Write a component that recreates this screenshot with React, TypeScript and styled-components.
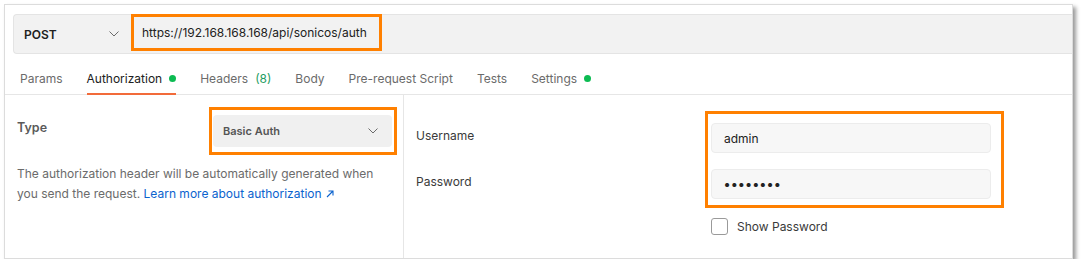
import styled, { createGlobalStyle } from 'styled-components';

const GlobalStyle = createGlobalStyle`
	html, body {
		margin: 0;
		padding: 0;
		background: #ffffff;
	}
	body {
		font-family: Inter, 'Noto Sans', 'Liberation Sans', sans-serif;
		font-size: 12px;
		color: #212121;
	}
`;

const ORANGE = '#ff8000';

const Card = styled.div`
	margin: 4px 0 0 4px;
	width: 1069px;
	height: 255px;
	box-sizing: border-box;
	background: #fff;
	border: 1px solid #dcdcdc;
	box-shadow: 3px 3px 4px rgba(0, 0, 0, 0.4);
	display: flex;
	flex-direction: column;
	overflow: hidden;
`;

const RequestBar = styled.div`
	margin: 9px 0 0 8px;
	height: 40px;
	box-sizing: border-box;
	display: flex;
	align-items: stretch;
	background: #f2f2f2;
	border: 1px solid #e4e4e4;
	border-right: none;
	border-radius: 4px 0 0 4px;
`;

const Method = styled.div`
	width: 117px;
	box-sizing: border-box;
	display: flex;
	align-items: center;
	justify-content: space-between;
	padding: 0 12px 0 10px;
	font-weight: 600;
	font-size: 12px;
	color: #212121;
`;

const Annotated = styled.div`
	border: 3px solid ${ORANGE};
	box-sizing: border-box;
`;

const UrlBox = styled(Annotated)`
	width: 251px;
	height: 37px;
	margin-top: -1px;
	display: flex;
	align-items: center;
	padding-left: 8px;
	color: #212121;
	font-size: 12px;
`;

const Tabs = styled.div`
	display: flex;
	gap: 24px;
	padding-left: 15px;
	height: 41px;
	border-bottom: 1px solid #e6e6e6;
	box-sizing: border-box;
`;

const Tab = styled.div<{ active?: boolean }>`
	display: flex;
	align-items: center;
	gap: 7px;
	padding-top: 10px;
	box-sizing: border-box;
	color: ${(p) => (p.active ? '#212121' : '#6b6b6b')};
	border-bottom: 2px solid ${(p) => (p.active ? '#f26b3a' : 'transparent')};
	margin-bottom: -1px;
	.count {
		color: #1f9d63;
	}
`;

const Dot = styled.span`
	width: 7px;
	height: 7px;
	border-radius: 50%;
	background: #0cbb52;
	display: inline-block;
`;

const Body = styled.div`
	flex: 1;
	display: flex;
`;

const LeftPanel = styled.div`
	width: 399px;
	box-sizing: border-box;
	border-right: 1px solid #e6e6e6;
	padding: 12px 6px 0 12px;
`;

const TypeRow = styled.div`
	display: flex;
	justify-content: space-between;
	align-items: flex-start;
`;

const TypeLabel = styled.div`
	margin-top: 13px;
	font-weight: 600;
	font-size: 12.5px;
	color: #5a5a5a;
	line-height: 16px;
`;

const TypeBox = styled(Annotated)`
	width: 188px;
	height: 48px;
	padding: 5px 2px 4px 1px;
`;

const Select = styled.div`
	height: 32px;
	background: #f0f0f0;
	border-radius: 4px;
	display: flex;
	align-items: center;
	justify-content: space-between;
	padding: 0 14px 0 10px;
	font-weight: 600;
	font-size: 11px;
	color: #555;
`;

const Description = styled.p`
	margin: 9px 0 0;
	max-width: 368px;
	line-height: 20px;
	color: #6b6b6b;
	a {
		color: #0b63ce;
		text-decoration: none;
	}
`;

const RightPanel = styled.div`
	flex: 1;
	display: flex;
	padding: 16px 0 0 12px;
`;

const Labels = styled.div`
	width: 289px;
	padding-top: 17px;
	display: flex;
	flex-direction: column;
	gap: 30px;
	color: #3a3a3a;
	line-height: 16px;
`;

const Fields = styled.div`
	display: flex;
	flex-direction: column;
`;

const FieldBox = styled(Annotated)`
	width: 299px;
	padding: 9px 10px 6px 3px;
	display: flex;
	flex-direction: column;
	gap: 16px;
`;

const Input = styled.div<{ secret?: boolean }>`
	height: 30px;
	box-sizing: border-box;
	background: #f7f7f7;
	border: 1px solid #ececec;
	border-radius: 4px;
	display: flex;
	align-items: center;
	padding-left: 12px;
	color: #212121;
	font-size: ${(p) => (p.secret ? '13px' : '12px')};
	letter-spacing: ${(p) => (p.secret ? '1px' : 'normal')};
	font-weight: ${(p) => (p.secret ? 700 : 400)};
`;

const CheckRow = styled.label`
	margin: 10px 0 0 6px;
	display: flex;
	align-items: center;
	gap: 9px;
	color: #3a3a3a;
`;

const Box = styled.span`
	width: 17px;
	height: 17px;
	box-sizing: border-box;
	border: 1px solid #9a9a9a;
	border-radius: 3px;
	background: #fff;
`;

const Chevron = () => (
	<svg width="10" height="6" viewBox="0 0 10 6" fill="none">
		<polyline points="0.5,0.5 5,5 9.5,0.5" stroke="#6b6b6b" strokeWidth="1" />
	</svg>
);

const ExternalArrow = () => (
	<svg width="8" height="8" viewBox="0 0 8 8" fill="none" style={{ marginLeft: 4 }}>
		<path d="M1 7 L7 1 M2.5 1 H7 V5.5" stroke="#0b63ce" strokeWidth="1.1" />
	</svg>
);

const App = () => {
	return (
		<>
			<GlobalStyle />
			<Card>
				<RequestBar>
					<Method>
						POST
						<Chevron />
					</Method>
					<UrlBox>https://192.168.168.168/api/sonicos/auth</UrlBox>
				</RequestBar>
				<Tabs>
					<Tab>Params</Tab>
					<Tab active>
						Authorization <Dot />
					</Tab>
					<Tab>
						Headers <span className='count'>(8)</span>
					</Tab>
					<Tab>Body</Tab>
					<Tab>Pre-request Script</Tab>
					<Tab>Tests</Tab>
					<Tab>
						Settings <Dot />
					</Tab>
				</Tabs>
				<Body>
					<LeftPanel>
						<TypeRow>
							<TypeLabel>Type</TypeLabel>
							<TypeBox>
								<Select>
									Basic Auth
									<Chevron />
								</Select>
							</TypeBox>
						</TypeRow>
						<Description>
							The authorization header will be automatically generated when you
							send the request.{' '}
							<a href='#'>
								Learn more about authorization
								<ExternalArrow />
							</a>
						</Description>
					</LeftPanel>
					<RightPanel>
						<Labels>
							<div>Username</div>
							<div>Password</div>
						</Labels>
						<Fields>
							<FieldBox>
								<Input>admin</Input>
								<Input secret>••••••••</Input>
							</FieldBox>
							<CheckRow>
								<Box />
								Show Password
							</CheckRow>
						</Fields>
					</RightPanel>
				</Body>
			</Card>
		</>
	);
};

export default App;
